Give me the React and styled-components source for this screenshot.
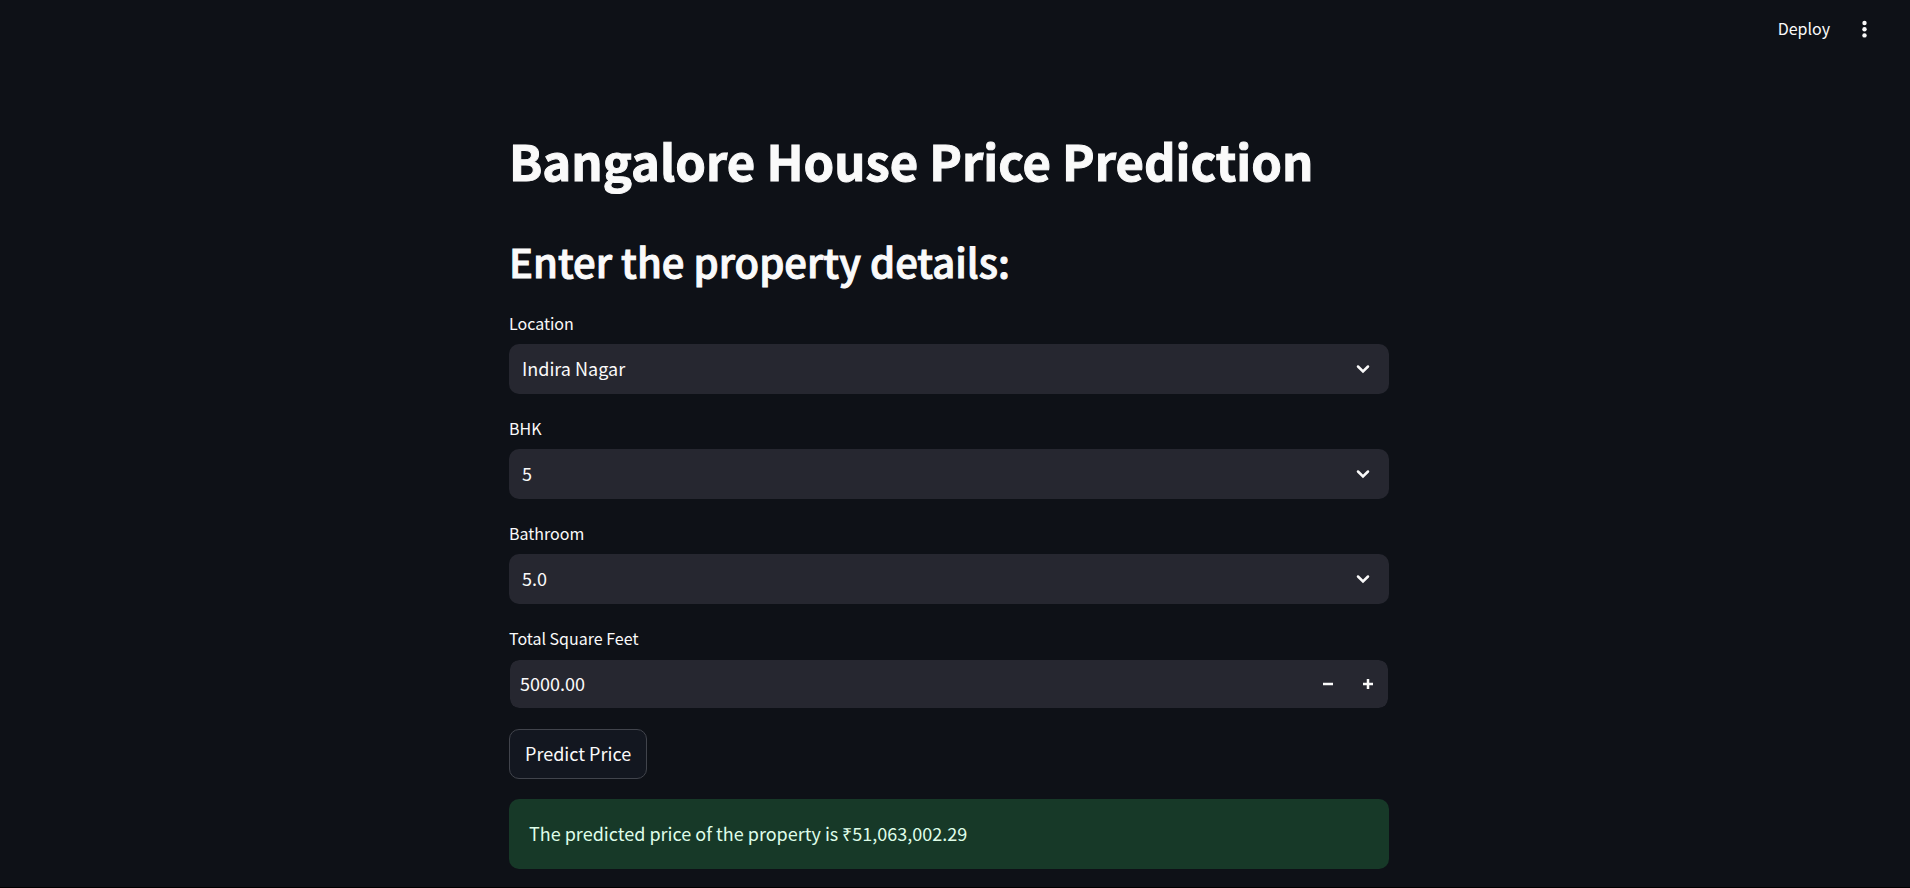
import React, { useState } from "react";
import styled, { createGlobalStyle } from "styled-components";

const GlobalStyle = createGlobalStyle`
  *, *::before, *::after { box-sizing: border-box; }
  body {
    margin: 0;
    background: #0e1117;
    color: #fafafa;
    font-family: "Source Sans Pro", "Noto Sans CJK SC", sans-serif;
    font-size: 18px;
    line-height: 30px;
  }
  button, input, select { font: inherit; color: inherit; }
`;

const Page = styled.div`
  min-height: 100vh;
  display: flex;
  flex-direction: column;
  border-bottom: 1px solid #000;
`;

const Header = styled.header`
  height: 58px;
  padding: 0 30px;
  display: flex;
  align-items: center;
  justify-content: flex-end;
  gap: 20px;
`;

const HeaderButton = styled.button`
  display: flex;
  align-items: center;
  justify-content: center;
  height: 30px;
  padding: 0 0 2px;
  min-width: 30px;
  border: 0;
  background: none;
  font-size: 16px;
  line-height: 28px;
  cursor: pointer;
`;

const Scroller = styled.div`
  flex: 1;
  padding-right: 12px;
`;

const Main = styled.main`
  width: 100%;
  max-width: 880px;
  margin: 0 auto;
  padding: 72px 0 18px;
`;

const Title = styled.h1`
  margin: 0 0 46px;
  font-size: 49px;
  line-height: 60px;
  font-weight: 700;
  -webkit-text-stroke: 1px currentColor;
`;

const Subtitle = styled.h2`
  margin: 0 0 23px;
  font-size: 40px;
  line-height: 50px;
  font-weight: 500;
  -webkit-text-stroke: 1px currentColor;
`;

const Form = styled.form`
  display: flex;
  flex-direction: column;
  align-items: stretch;
  gap: 20px;
`;

const Field = styled.div`
  display: flex;
  flex-direction: column;
  gap: 7px;
`;

const Label = styled.label`
  font-size: 16px;
  line-height: 28px;
`;

const Control = styled.div`
  display: grid;
  grid-template-columns: 1fr;
  align-items: center;
  height: 50px;
  border-radius: 10px;
  background: #262730;
  > * { grid-area: 1 / 1; }
`;

const Select = styled.select`
  appearance: none;
  width: 100%;
  height: 50px;
  padding: 0 50px 2px 13px;
  border: 0;
  border-radius: 10px;
  background: none;
  option { background: #262730; }
`;

const Chevron = styled.svg`
  justify-self: end;
  margin-right: 11px;
  pointer-events: none;
`;

const NumberBox = styled.div`
  display: flex;
  height: 50px;
  border: 1px solid #0e1117;
  border-radius: 10px;
  background: #262730;
  background-clip: padding-box;
`;

const NumberInput = styled.input`
  flex: 1;
  min-width: 0;
  padding: 0 10px 2px;
  border: 0;
  background: none;
`;

const StepButton = styled.button`
  display: flex;
  align-items: center;
  justify-content: center;
  width: 40px;
  padding: 0;
  border: 0;
  background: none;
  cursor: pointer;
`;

const Submit = styled.button`
  align-self: flex-start;
  height: 50px;
  padding: 0 15px 2px;
  border: 1px solid #41444c;
  border-radius: 10px;
  background: #131720;
  cursor: pointer;
`;

const Result = styled.output`
  display: block;
  padding: 19px 20px 21px;
  border-radius: 10px;
  background: #173928;
  color: #dffde9;
`;

function SelectField({ id, label, options, value, onChange }) {
  return (
    <Field>
      <Label htmlFor={id}>{label}</Label>
      <Control>
        <Select id={id} value={value} onChange={(e) => onChange(e.target.value)}>
          {options.map((option) => (
            <option key={option}>{option}</option>
          ))}
        </Select>
        <Chevron width="30" height="30" viewBox="0 0 30 30" fill="none" aria-hidden="true">
          <path d="M10 12.5 15 17.5 20 12.5" stroke="#fafafa" strokeWidth="2.5" strokeLinecap="round" />
        </Chevron>
      </Control>
    </Field>
  );
}

export default function App() {
  const [location, setLocation] = useState("Indira Nagar");
  const [bhk, setBhk] = useState("5");
  const [bath, setBath] = useState("5.0");
  const [area, setArea] = useState("5000.00");
  const step = (amount) => setArea((Number(area) + amount).toFixed(2));

  return (
    <Page>
      <GlobalStyle />
      <Header>
        <HeaderButton type="button">Deploy</HeaderButton>
        <HeaderButton type="button" aria-label="Main menu">
          <svg width="20" height="20" viewBox="0 0 20 20" fill="#fafafa" aria-hidden="true">
            <circle cx="9.5" cy="5" r="2.2" />
            <circle cx="9.5" cy="11.2" r="2.2" />
            <circle cx="9.5" cy="17.4" r="2.2" />
          </svg>
        </HeaderButton>
      </Header>
      <Scroller>
        <Main>
          <Title>Bangalore House Price Prediction</Title>
          <Subtitle>Enter the property details:</Subtitle>
          <Form onSubmit={(e) => e.preventDefault()}>
            <SelectField id="location" label="Location" options={["Indira Nagar", "Whitefield", "Hebbal"]} value={location} onChange={setLocation} />
            <SelectField id="bhk" label="BHK" options={["1", "2", "3", "4", "5"]} value={bhk} onChange={setBhk} />
            <SelectField id="bathroom" label="Bathroom" options={["1.0", "2.0", "3.0", "4.0", "5.0"]} value={bath} onChange={setBath} />
            <Field>
              <Label htmlFor="area">Total Square Feet</Label>
              <NumberBox>
                <NumberInput id="area" inputMode="decimal" value={area} onChange={(e) => setArea(e.target.value)} />
                <StepButton type="button" aria-label="Decrease" onClick={() => step(-1)}>
                  <svg width="10" height="10" viewBox="0 0 10 10" aria-hidden="true">
                    <path d="M0 5H10" stroke="#fafafa" strokeWidth="2.5" />
                  </svg>
                </StepButton>
                <StepButton type="button" aria-label="Increase" onClick={() => step(1)}>
                  <svg width="10" height="10" viewBox="0 0 10 10" aria-hidden="true">
                    <path d="M0 5H10M5 0V10" stroke="#fafafa" strokeWidth="2.5" />
                  </svg>
                </StepButton>
              </NumberBox>
            </Field>
            <Submit type="submit">Predict Price</Submit>
            <Result htmlFor="location bhk bathroom area">The predicted price of the property is ₹51,063,002.29</Result>
          </Form>
        </Main>
      </Scroller>
    </Page>
  );
}
